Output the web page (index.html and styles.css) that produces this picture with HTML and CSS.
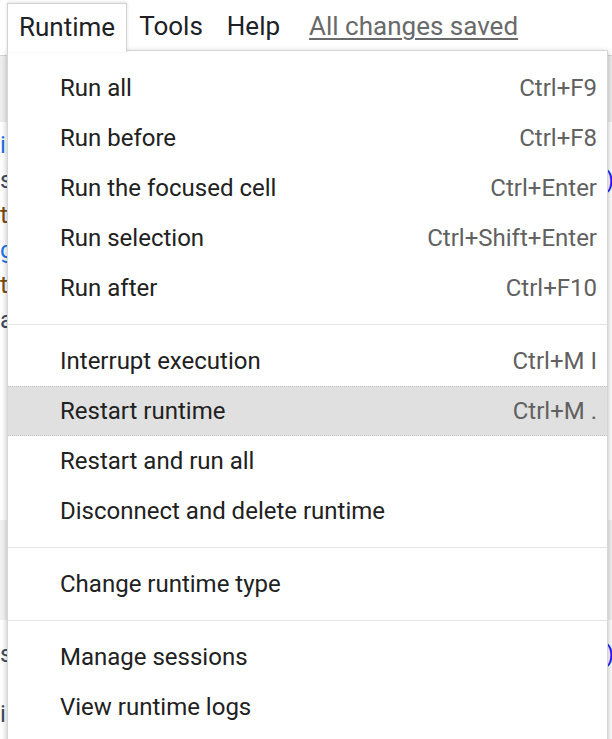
FILE: index.html
```html
<!DOCTYPE html>
<html>
<head>
<meta charset="utf-8">
<link rel="stylesheet" href="styles.css">
</head>
<body>
<div class="page">
  <header class="menubar">
    <div class="mb-item mb-tab">Runtime</div>
    <div class="mb-item">Tools</div>
    <div class="mb-item">Help</div>
    <div class="mb-item mb-saved">All changes saved</div>
  </header>
  <div class="toolbar"></div>
  <section class="textcell">
    <div class="line"><span class="blue">i</span></div>
    <div class="line"><span class="slate">s</span><span class="link">)</span></div>
    <div class="line"><span class="brown">t</span></div>
    <div class="line"><span class="blue">g</span></div>
    <div class="line"><span class="brown">t</span></div>
    <div class="line"><span class="slate">a</span></div>
  </section>
  <section class="outputcell"></section>
  <section class="codecell"></section>
  <section class="textcell lower">
    <div class="line"><span class="slate">s</span><span class="link">)</span></div>
    <div class="line tall"><span class="slate">i</span></div>
  </section>

  <div class="menu">
    <div class="mi"><span class="label">Run all</span><span class="kbd">Ctrl+F9</span></div>
    <div class="mi"><span class="label">Run before</span><span class="kbd">Ctrl+F8</span></div>
    <div class="mi"><span class="label">Run the focused cell</span><span class="kbd">Ctrl+Enter</span></div>
    <div class="mi"><span class="label">Run selection</span><span class="kbd">Ctrl+Shift+Enter</span></div>
    <div class="mi"><span class="label">Run after</span><span class="kbd">Ctrl+F10</span></div>
    <div class="sep"></div>
    <div class="mi"><span class="label">Interrupt execution</span><span class="kbd">Ctrl+M I</span></div>
    <div class="mi active"><span class="label">Restart runtime</span><span class="kbd">Ctrl+M .</span></div>
    <div class="mi"><span class="label">Restart and run all</span></div>
    <div class="mi"><span class="label">Disconnect and delete runtime</span></div>
    <div class="sep"></div>
    <div class="mi"><span class="label">Change runtime type</span></div>
    <div class="sep"></div>
    <div class="mi"><span class="label">Manage sessions</span></div>
    <div class="mi"><span class="label">View runtime logs</span></div>
  </div>
</div>
</body>
</html>
```

FILE: styles.css
```css
html, body {
  margin: 0;
  padding: 0;
  background: #ffffff;
}
body {
  font-family: Roboto, "Noto Sans", "Liberation Sans", sans-serif;
  overflow: hidden;
  width: 612px;
  height: 739px;
}
.page {
  position: relative;
  width: 612px;
  height: 739px;
  overflow: hidden;
}
.menubar {
  display: flex;
  align-items: flex-start;
  height: 52px;
  padding: 3px 0 0 7px;
  border-bottom: 1px solid #d6d6d6;
  background: #ffffff;
}
.mb-item {
  height: 46px;
  line-height: 46px;
  padding: 0 12px;
  font-size: 26px;
  color: #202124;
}
.mb-tab {
  position: relative;
  z-index: 3;
  height: 48px;
  padding: 0 11px;
  border: 1px solid #d2d2d2;
  border-bottom: none;
  background: #ffffff;
  box-shadow: 0 -1px 3px rgba(0,0,0,0.12);
}
.mb-saved {
  margin-left: 5px;
  color: #6a6a6a;
  text-decoration: underline;
  text-decoration-thickness: 2px;
  text-underline-offset: 3px;
}
.toolbar {
  height: 66px;
  background: #eeeeee;
}
.textcell {
  padding-top: 6px;
}
.line {
  display: flex;
  justify-content: space-between;
  height: 35px;
  line-height: 35px;
  font-size: 24px;
  padding-left: 0;
  white-space: nowrap;
  margin-right: -2px;
}
.blue { color: #1a73e8; }
.slate { color: #3c4a5e; }
.brown { color: #7a4a12; }
.link {
  color: #1a1aff;
  text-decoration: underline;
}
.outputcell {
  height: 182px;
}
.codecell {
  height: 100px;
  background: #f2f2f2;
}
.lower {
  padding-top: 17px;
}
.lower .tall {
  margin-top: 25px;
}
.menu {
  position: absolute;
  z-index: 2;
  top: 50px;
  left: 7px;
  width: 599px;
  height: 720px;
  padding-top: 12px;
  background: #ffffff;
  border: 1px solid #d6d6d6;
  box-shadow: 0 2px 6px rgba(0,0,0,0.28);
}
.mi {
  display: flex;
  justify-content: space-between;
  align-items: center;
  height: 50px;
  padding: 0 10px 0 52px;
  font-size: 24px;
  color: #212121;
  box-sizing: border-box;
}
.mi.active {
  background: #e0e0e0;
  border-top: 1px dotted #c4c4c4;
  border-bottom: 1px dotted #c4c4c4;
}
.kbd {
  color: #616161;
}
.sep {
  height: 1px;
  margin: 11px 0;
  background: #e4e4e4;
}
```
